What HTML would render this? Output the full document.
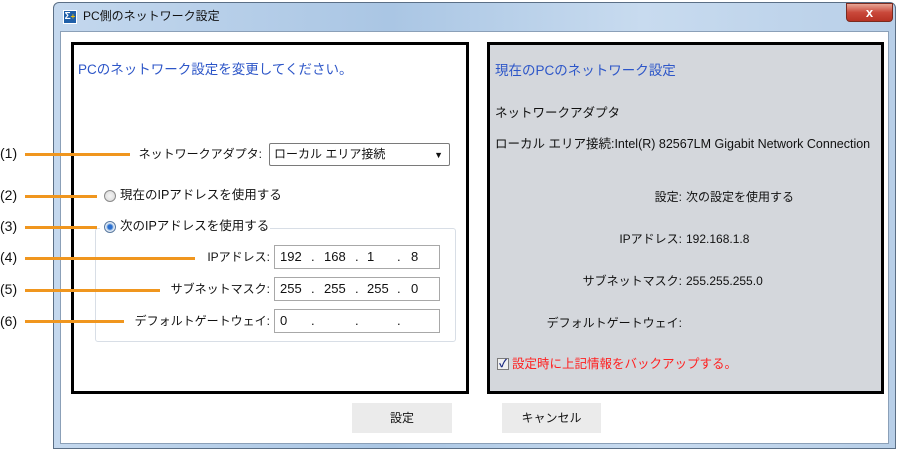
<!DOCTYPE html>
<html><head><meta charset="utf-8"><style>
*{margin:0;padding:0;box-sizing:border-box}
body{width:902px;height:450px;background:#fff;position:relative;overflow:hidden;font-family:"Liberation Sans","Noto Sans CJK JP",sans-serif;font-size:12px;line-height:16px;color:#111}
.a{position:absolute;white-space:nowrap;line-height:16px}
.ln{position:absolute;height:3px;background:#f0961e}
.lb{position:absolute;font-size:14px;left:0;line-height:16px}
.inp{position:absolute;left:274px;width:166px;height:24px;border:1px solid #a8a8a8;background:#fff;font-size:13px}
.inp span{position:absolute;top:3px;line-height:16px}
.r{text-align:right}
</style></head><body>
<div class="a" style="left:53px;top:2px;width:843px;height:447px;background:linear-gradient(90deg,#c4d8ee,#aac6e4 40%,#c8dbef 70%,#b8cfe8);border:1px solid #5b6f86;border-radius:6px 6px 0 0"></div>
<div class="a" style="left:60px;top:31px;width:829px;height:413px;background:#fff;border:1px solid #8ba0b8"></div>
<div class="a" style="left:63px;top:10px;width:14px;height:14px;background:#1f5fa8;border:1px solid #fff;color:#fff;font-size:10px;line-height:12px;text-align:center;font-weight:bold">Σ<span style="color:#f5c000;font-size:8px">+</span></div>
<div class="a" style="left:83px;top:8px;font-size:12px">PC側のネットワーク設定</div>
<div class="a" style="left:846px;top:3px;width:47px;height:19px;background:linear-gradient(#e8a595,#c9483a 50%,#b73224);border:1px solid #7a2b20;border-radius:0 0 4px 4px;color:#fff;text-align:center;font-weight:bold;font-size:13px;line-height:17px">x</div>

<div class="a" style="left:71px;top:42px;width:398px;height:352px;border:3px solid #000"></div>
<div class="a" style="left:78px;top:62px;font-size:13.5px;color:#2d56c8">PCのネットワーク設定を変更してください。</div>
<div class="a r" style="left:120px;top:146px;width:142px">ネットワークアダプタ:</div>
<div class="a" style="left:269px;top:143px;width:181px;height:23px;border:1px solid #7a7a7a;border-radius:2px;background:#fff;font-size:12px;padding:2px 4px">ローカル エリア接続<span style="position:absolute;right:6px;top:3px;font-size:9px">▼</span></div>

<div class="a" style="left:104px;top:190px;width:12px;height:12px;border-radius:50%;border:1px solid #8a8a8a;background:radial-gradient(#f4f4f4,#d8d8d8)"></div>
<div class="a" style="left:120px;top:187px;font-size:12.5px">現在のIPアドレスを使用する</div>
<div class="a" style="left:95px;top:228px;width:361px;height:114px;border:1px solid #d8dee6;border-radius:3px"></div>
<div class="a" style="left:100px;top:218px;width:170px;height:18px;background:#fff"></div>
<div class="a" style="left:104px;top:221px;width:12px;height:12px;border-radius:50%;border:1px solid #5a7aa0;background:radial-gradient(#2a6fd0 30%,#9fc0e6 45%,#e8eef6 60%)"></div>
<div class="a" style="left:120px;top:218px;font-size:12.5px">次のIPアドレスを使用する</div>

<div class="a r" style="left:150px;top:249px;width:120px">IPアドレス:</div>
<div class="inp" style="top:245px"><span style="left:5px">192</span><span style="left:36px">.</span><span style="left:49px">168</span><span style="left:80px">.</span><span style="left:92px">1</span><span style="left:122px">.</span><span style="left:136px">8</span></div>
<div class="a r" style="left:140px;top:281px;width:130px">サブネットマスク:</div>
<div class="inp" style="top:277px"><span style="left:5px">255</span><span style="left:36px">.</span><span style="left:49px">255</span><span style="left:80px">.</span><span style="left:92px">255</span><span style="left:122px">.</span><span style="left:136px">0</span></div>
<div class="a r" style="left:120px;top:313px;width:150px">デフォルトゲートウェイ:</div>
<div class="inp" style="top:309px"><span style="left:5px">0</span><span style="left:36px">.</span><span style="left:80px">.</span><span style="left:122px">.</span></div>

<div class="lb" style="top:145px">(1)</div><div class="ln" style="left:25px;top:153px;width:105px"></div>
<div class="lb" style="top:187px">(2)</div><div class="ln" style="left:25px;top:195px;width:72px"></div>
<div class="lb" style="top:218px">(3)</div><div class="ln" style="left:25px;top:226px;width:72px"></div>
<div class="lb" style="top:249px">(4)</div><div class="ln" style="left:25px;top:257px;width:170px"></div>
<div class="lb" style="top:281px">(5)</div><div class="ln" style="left:25px;top:289px;width:135px"></div>
<div class="lb" style="top:313px">(6)</div><div class="ln" style="left:25px;top:320px;width:99px"></div>

<div class="a" style="left:487px;top:42px;width:397px;height:352px;border:3px solid #000;background:#d4d7dc;overflow:hidden">
<div class="a" style="left:5px;top:18px;font-size:13.5px;color:#2d56c8">現在のPCのネットワーク設定</div>
<div class="a" style="left:5px;top:60px;font-size:12.5px">ネットワークアダプタ</div>
<div class="a" style="left:5px;top:91px;font-size:12.5px">ローカル エリア接続:Intel(R) 82567LM Gigabit Network Connection</div>
<div class="a r" style="left:40px;top:144px;width:152px">設定:</div><div class="a" style="left:196px;top:144px">次の設定を使用する</div>
<div class="a r" style="left:40px;top:186px;width:152px">IPアドレス:</div><div class="a" style="left:196px;top:186px">192.168.1.8</div>
<div class="a r" style="left:40px;top:228px;width:152px">サブネットマスク:</div><div class="a" style="left:196px;top:228px">255.255.255.0</div>
<div class="a r" style="left:20px;top:270px;width:172px">デフォルトゲートウェイ:</div>
<div class="a" style="left:7px;top:313px;width:12px;height:12px;border:1px solid #7a7a7a;background:#f0f0f0;color:#1a2a80;font-size:11px;line-height:10px;text-align:center;font-weight:bold">✓</div>
<div class="a" style="left:22px;top:311px;font-size:12.5px;color:#ff2020">設定時に上記情報をバックアップする。</div>
</div>

<div class="a" style="left:352px;top:403px;width:100px;height:30px;background:#ebebeb;text-align:center;line-height:30px">設定</div>
<div class="a" style="left:502px;top:403px;width:99px;height:30px;background:#ebebeb;text-align:center;line-height:30px">キャンセル</div>
</body></html>
